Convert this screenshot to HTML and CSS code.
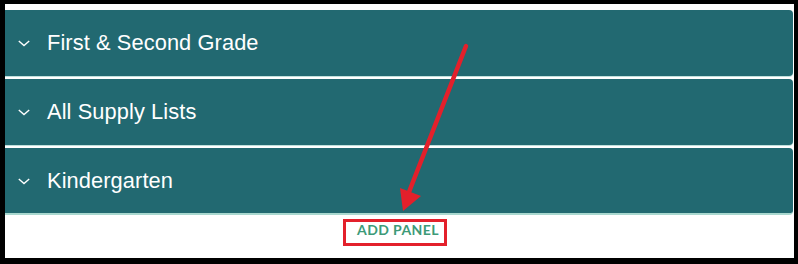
FILE: index.html
```html
<!DOCTYPE html>
<html>
<head>
<meta charset="utf-8">
<link rel="stylesheet" href="styles.css">
</head>
<body>
<div class="frame">
  <div class="accordion">
    <div class="panel"><svg class="chev" width="12" height="7" viewBox="0 0 12 7"><path d="M0.8 1 L6 5.6 L11.2 1" fill="none" stroke="#fff" stroke-width="1.4"/></svg><span class="title">First &amp; Second Grade</span></div>
    <div class="panel"><svg class="chev" width="12" height="7" viewBox="0 0 12 7"><path d="M0.8 1 L6 5.6 L11.2 1" fill="none" stroke="#fff" stroke-width="1.4"/></svg><span class="title">All Supply Lists</span></div>
    <div class="panel last"><svg class="chev" width="12" height="7" viewBox="0 0 12 7"><path d="M0.8 1 L6 5.6 L11.2 1" fill="none" stroke="#fff" stroke-width="1.4"/></svg><span class="title">Kindergarten</span></div>
  </div>
  <div class="actions"><span class="add">ADD PANEL</span></div>
  <div class="highlight"></div>
  <svg class="arrow" width="798" height="264" viewBox="0 0 798 264">
    <line x1="466" y1="46" x2="409" y2="192" stroke="#e3202b" stroke-width="4.5" stroke-linecap="round"/>
    <polygon points="400,188 421,196 403,211" fill="#e3202b"/>
  </svg>
</div>
</body>
</html>
```
FILE: styles.css
```css
html, body {
  margin: 0;
  padding: 0;
  background: #000;
  width: 798px;
  height: 264px;
  overflow: hidden;
}
.frame {
  margin: 4px 4px 0 5px;
  height: 254px;
  background: #fff;
  padding-top: 6px;
  box-sizing: border-box;
  font-family: "Liberation Sans", Arial, sans-serif;
}
.accordion {
  display: flex;
  flex-direction: column;
  gap: 3px;
  margin-right: 1px;
}
.panel {
  height: 66px;
  background: #226971;
  border-radius: 0 4px 4px 0;
  display: flex;
  align-items: center;
  padding-left: 13px;
  box-sizing: border-box;
  box-shadow: 0 1px 0 #bfe0dc;
}
.panel.last {
  height: 67px;
  padding-top: 1px;
  border-bottom: 2px solid #a9d8cf;
  box-shadow: none;
}
.chev {
  margin-right: 17px;
  margin-top: 1px;
}
.title {
  color: #fff;
  font-size: 21.8px;
  letter-spacing: 0.1px;
}
.actions {
  display: flex;
  justify-content: center;
  padding-top: 6px;
  padding-right: 3px;
}
.add {
  font-family: Lato, "Open Sans", sans-serif;
  font-weight: 700;
  font-size: 14px;
  letter-spacing: 0.4px;
  color: #3d9a78;
  line-height: 17px;
}
.highlight {
  position: absolute;
  left: 343px;
  top: 219px;
  width: 98px;
  height: 21px;
  border: 3px solid #e3202b;
}
.arrow {
  position: absolute;
  left: 0;
  top: 0;
  pointer-events: none;
}
```
